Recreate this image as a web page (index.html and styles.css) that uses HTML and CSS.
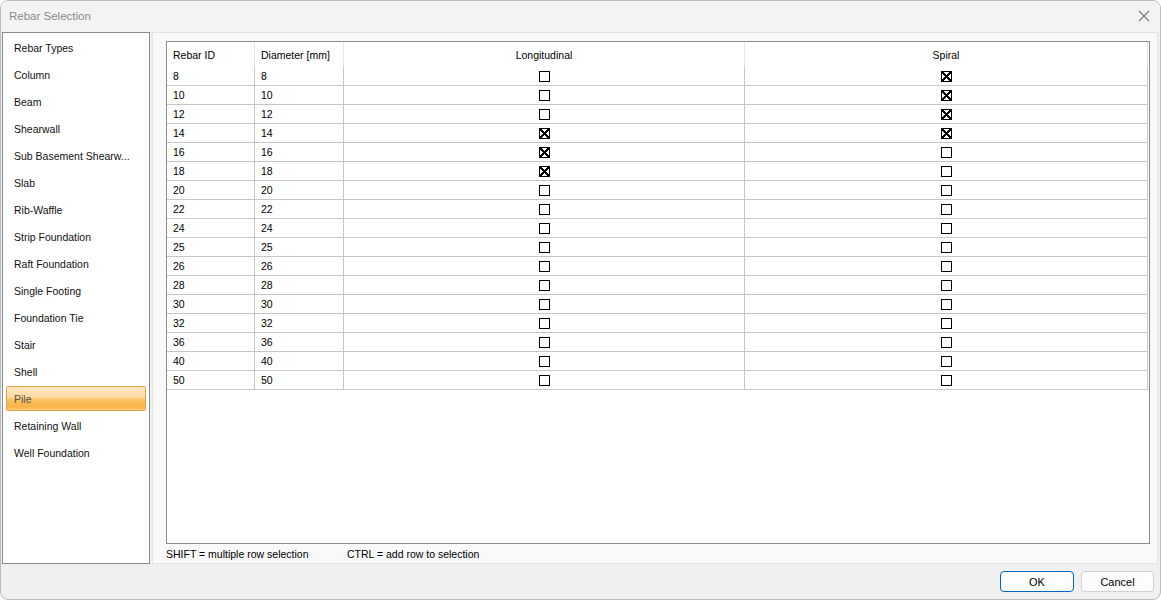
FILE: index.html
```html
<!DOCTYPE html>
<html lang="en">

<head>
    <title>Rebar Selection</title>
    <meta charset="utf-8">
    <link rel="stylesheet" href="styles.css">
</head>

<body>
    <div class="window">
        <div class="titlebar">
            <span class="title">Rebar Selection</span>
            <svg class="close" width="12" height="12" viewBox="0 0 12 12">
                <path d="M1 1 L11 11 M11 1 L1 11" stroke="#7a7a7a" stroke-width="1.1" fill="none" />
            </svg>
        </div>

        <div class="content">
            <div class="type-list">
                <div class="type-item">Rebar Types</div>
                <div class="type-item">Column</div>
                <div class="type-item">Beam</div>
                <div class="type-item">Shearwall</div>
                <div class="type-item">Sub Basement Shearw...</div>
                <div class="type-item">Slab</div>
                <div class="type-item">Rib-Waffle</div>
                <div class="type-item">Strip Foundation</div>
                <div class="type-item">Raft Foundation</div>
                <div class="type-item">Single Footing</div>
                <div class="type-item">Foundation Tie</div>
                <div class="type-item">Stair</div>
                <div class="type-item">Shell</div>
                <div class="type-item selected">Pile</div>
                <div class="type-item">Retaining Wall</div>
                <div class="type-item">Well Foundation</div>
            </div>

            <div class="panel">
                <div class="grid">
                    <div class="grid-head">
                        <div class="hcell">Rebar ID</div>
                        <div class="hcell">Diameter [mm]</div>
                        <div class="hcell center">Longitudinal</div>
                        <div class="hcell center">Spiral</div>
                    </div>
                    <div id="grid-body"></div>
                </div>
                <div class="hint">
                    <span class="hint-shift">SHIFT = multiple row selection</span>
                    <span>CTRL = add row to selection</span>
                </div>
            </div>
        </div>

        <div class="footer">
            <button class="btn btn-ok">OK</button>
            <button class="btn">Cancel</button>
        </div>
    </div>

    <script>
        // id, diameter, longitudinal, spiral
        var rebars = [
            [8, 8, 0, 1], [10, 10, 0, 1], [12, 12, 0, 1], [14, 14, 1, 1],
            [16, 16, 1, 0], [18, 18, 1, 0], [20, 20, 0, 0], [22, 22, 0, 0],
            [24, 24, 0, 0], [25, 25, 0, 0], [26, 26, 0, 0], [28, 28, 0, 0],
            [30, 30, 0, 0], [32, 32, 0, 0], [36, 36, 0, 0], [40, 40, 0, 0],
            [50, 50, 0, 0]
        ];

        function box(on) {
            return '<span class="chk' + (on ? ' on' : '') + '"></span>';
        }

        var html = '';
        rebars.forEach(function (r) {
            html += '<div class="grid-row">' +
                '<div class="cell">' + r[0] + '</div>' +
                '<div class="cell">' + r[1] + '</div>' +
                '<div class="cell center">' + box(r[2]) + '</div>' +
                '<div class="cell center">' + box(r[3]) + '</div>' +
                '</div>';
        });
        document.getElementById('grid-body').innerHTML = html;
    </script>
</body>

</html>
```

FILE: styles.css
```css
body {
    padding: 0;
    margin: 0;
    overflow: hidden;
    background: #ffffff;
    font-family: 'Liberation Sans', Arial, sans-serif;
    font-size: 10.5px;
    color: #000000;
}

.window {
    width: 1161px;
    height: 600px;
    box-sizing: border-box;
    border: 1px solid #bdbdbd;
    border-radius: 8px;
    background: #f0f0f0;
    display: flex;
    flex-direction: column;
    overflow: hidden;
}

.titlebar {
    height: 31px;
    box-sizing: border-box;
    flex-shrink: 0;
    display: flex;
    align-items: center;
    justify-content: space-between;
    padding: 0 10px 2px 8px;
    background: #f3f3f3;
}

.title {
    font-size: 11.5px;
    color: #8b8b8b;
}

.close {
    display: block;
}

.content {
    height: 532px;
    display: flex;
    gap: 2px;
    padding: 0 2px 0 1px;
}

.type-list {
    width: 148px;
    box-sizing: border-box;
    border: 1px solid #8c8c8c;
    background: #ffffff;
    padding-top: 2px;
    display: flex;
    flex-direction: column;
    gap: 2px;
}

.type-item {
    height: 25px;
    flex-shrink: 0;
    box-sizing: border-box;
    margin: 0 3px;
    padding: 0 7px;
    border: 1px solid transparent;
    border-radius: 2px;
    display: flex;
    align-items: center;
    white-space: nowrap;
    overflow: hidden;
    color: #111111;
}

.type-item.selected {
    border-color: #e2a648;
    color: #555555;
    background: linear-gradient(#fee7c3 0%, #fdd9a2 45%, #fbc566 52%, #f8b347 85%, #fbcb7c 100%);
}

.panel {
    flex: 1;
    box-sizing: border-box;
    background: #f9f9f9;
    border: 1px solid #e4e4e4;
    padding: 8px 7px 0 13px;
    display: flex;
    flex-direction: column;
}

.grid {
    height: 503px;
    box-sizing: border-box;
    border: 1px solid #8c8c8c;
    background: #ffffff;
}

.grid-head,
.grid-row {
    display: grid;
    grid-template-columns: 88px 89px 401px 403px;
}

.hcell {
    height: 25px;
    display: flex;
    align-items: center;
    padding: 0 6px;
    border-right: 1px solid #e6e6e6;
}

.grid-row {
    width: 981px;
    height: 19px;
    box-sizing: border-box;
    border-bottom: 1px solid #c6c6c6;
}

.cell {
    display: flex;
    align-items: center;
    padding: 0 6px;
    border-right: 1px solid #c6c6c6;
}

.center {
    justify-content: center;
    padding: 0;
}

.chk {
    width: 11px;
    height: 11px;
    box-sizing: border-box;
    border: 1px solid #000000;
    background: #ffffff;
    margin-top: 1px;
}

.chk.on {
    background:
        linear-gradient(45deg, transparent 40%, #000 40%, #000 60%, transparent 60%),
        linear-gradient(-45deg, transparent 40%, #000 40%, #000 60%, transparent 60%);
}

.hint {
    display: flex;
    padding-top: 4px;
}

.hint-shift {
    width: 181px;
}

.footer {
    flex: 1;
    display: flex;
    justify-content: flex-end;
    align-items: flex-start;
    gap: 7px;
    padding: 7px 6px 0 0;
}

.btn {
    width: 73px;
    height: 21px;
    box-sizing: border-box;
    border: 1px solid #d0d0d0;
    border-radius: 4px;
    background: #fdfdfd;
    font-family: 'Liberation Sans', Arial, sans-serif;
    font-size: 11px;
    color: #000000;
    padding: 0;
}

.btn-ok {
    width: 74px;
    border-color: #0067c0;
}
```
